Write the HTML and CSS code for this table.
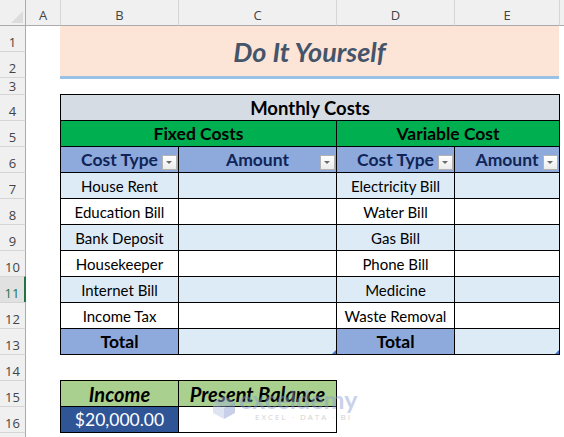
FILE: index.html
```html
<!DOCTYPE html>
<html>
<head>
<meta charset="utf-8">
<link rel="stylesheet" href="styles.css">
</head>
<body>
<div class="sheet">
  <div class="corner"></div>
  <div class="colh a">A</div>
  <div class="colh">B</div>
  <div class="colh">C</div>
  <div class="colh">D</div>
  <div class="colh">E</div>
  <div class="colh"></div>

  <div class="rowheads">
    <div class="rowh first">1</div>
    <div class="rowh">2</div>
    <div class="rowh short">3</div>
    <div class="rowh">4</div>
    <div class="rowh">5</div>
    <div class="rowh">6</div>
    <div class="rowh">7</div>
    <div class="rowh">8</div>
    <div class="rowh">9</div>
    <div class="rowh">10</div>
    <div class="rowh sel">11</div>
    <div class="rowh">12</div>
    <div class="rowh">13</div>
    <div class="rowh">14</div>
    <div class="rowh">15</div>
    <div class="rowh">16</div>
    <div class="rowh last"></div>
  </div>

  <div class="title">Do It Yourself</div>

  <div class="costs">
    <div class="span4 hdr-main">Monthly Costs</div>
    <div class="span2 hdr-group">Fixed Costs</div>
    <div class="span2 hdr-group">Variable Cost</div>
    <div class="hdr-col">Cost Type<span class="filter"></span></div>
    <div class="hdr-col">Amount<span class="filter"></span></div>
    <div class="hdr-col">Cost Type<span class="filter"></span></div>
    <div class="hdr-col">Amount<span class="filter"></span></div>

    <div class="alt">House Rent</div><div class="alt"></div><div class="alt">Electricity Bill</div><div class="alt"></div>
    <div>Education Bill</div><div></div><div>Water Bill</div><div></div>
    <div class="alt">Bank Deposit</div><div class="alt"></div><div class="alt">Gas Bill</div><div class="alt"></div>
    <div>Housekeeper</div><div></div><div>Phone Bill</div><div></div>
    <div class="alt">Internet Bill</div><div class="alt"></div><div class="alt">Medicine</div><div class="alt"></div>
    <div>Income Tax</div><div></div><div>Waste Removal</div><div></div>

    <div class="total">Total</div><div class="alt handle"></div><div class="total">Total</div><div class="alt handle"></div>
  </div>

  <div class="income">
    <div class="inc-h">Income</div>
    <div class="inc-h">Present Balance</div>
    <div class="inc-val">$20,000.00</div>
    <div></div>
  </div>

  <div class="watermark">
    <svg class="wm-logo" width="26" height="26" viewBox="0 0 26 26">
      <polygon points="13,2 24,8 13,14 2,8" fill="#9fb0dc"/>
      <polygon points="2,8 13,14 13,25 2,19" fill="#b9c5e6"/>
      <polygon points="24,8 13,14 13,25 24,19" fill="#8799cf"/>
    </svg>
    <div class="wm-text">
      <div class="wm-name">exceldemy</div>
      <div class="wm-tag">EXCEL · DATA · BI</div>
    </div>
  </div>
</div>
</body>
</html>
```

FILE: styles.css
```css
* { box-sizing: border-box; }

html, body {
  margin: 0;
  padding: 0;
  background: #ffffff;
}

body {
  width: 564px;
  height: 437px;
  overflow: hidden;
  font-family: Lato, "Liberation Sans", sans-serif;
}

.sheet {
  position: relative;
  display: grid;
  grid-template-columns: 26px 34px 118px 158px 118px 105px 1fr;
  grid-template-rows: 26px 25px 26px 17px repeat(13, 26px) 1fr;
  width: 564px;
  height: 437px;
  overflow: hidden;
}

.corner {
  grid-row: 1;
  grid-column: 1;
  position: relative;
  background: #f0f0f0;
  border-right: 1px solid #ababab;
  border-bottom: 1px solid #ababab;
}

.corner::after {
  content: "";
  position: absolute;
  right: 2px;
  bottom: 2px;
  width: 0;
  height: 0;
  border-left: 12px solid transparent;
  border-bottom: 12px solid #dcdcdc;
}

.colh {
  grid-row: 1;
  display: flex;
  align-items: flex-end;
  justify-content: center;
  padding-bottom: 3px;
  background: #f0f0f0;
  border-bottom: 1px solid #ababab;
  border-left: 1px solid #d5d5d5;
  font-family: "Open Sans", "DejaVu Sans", sans-serif;
  font-size: 13px;
  line-height: 1;
  color: #444444;
}

.colh.a { border-left: none; }

.rowheads {
  grid-column: 1;
  grid-row: 2 / -1;
  display: flex;
  flex-direction: column;
  background: #f0f0f0;
}

.rowh {
  flex: none;
  height: 26px;
  display: flex;
  align-items: flex-end;
  justify-content: center;
  padding-bottom: 2px;
  border-top: 1px solid #d5d5d5;
  border-right: 1px solid #ababab;
  font-family: "Open Sans", "DejaVu Sans", sans-serif;
  font-size: 13px;
  line-height: 1;
  color: #444444;
}

.rowh.first { height: 25px; border-top: none; }
.rowh.short { height: 17px; padding-bottom: 1px; }
.rowh.last { flex: 1; }

.rowh.sel {
  background: #e1e1e1;
  color: #217346;
  border-right: 2px solid #217346;
}

.title {
  grid-column: 3 / 7;
  grid-row: 2 / 5;
  align-self: start;
  height: 53px;
  display: flex;
  align-items: center;
  justify-content: center;
  background: #fce4d6;
  border-bottom: 3px solid #9bc2e6;
  font-style: italic;
  font-weight: 700;
  font-size: 27px;
  color: #44546a;
}

.costs {
  grid-column: 3 / 8;
  grid-row: 5 / 15;
  align-self: start;
  justify-self: start;
  width: 500px;
  display: grid;
  grid-template-columns: 118px 158px 118px 105px;
  grid-auto-rows: 26px;
  border-right: 1px solid #000;
  border-bottom: 1px solid #000;
  font-size: 15px;
  color: #000;
}

.costs > div,
.income > div {
  position: relative;
  display: flex;
  align-items: center;
  justify-content: center;
  border-left: 1px solid #000;
  border-top: 1px solid #000;
  white-space: nowrap;
}

.span4 { grid-column: span 4; }
.span2 { grid-column: span 2; }

.hdr-main {
  background: #d6dce4;
  font-weight: 700;
  font-size: 18.5px;
}

.hdr-group {
  background: #00b050;
  font-weight: 700;
  font-size: 17.5px;
}

.hdr-col {
  background: #8ea9db;
  font-weight: 700;
  font-size: 17.5px;
  color: #102458;
}

.alt { background: #ddebf7; }

.total {
  background: #8ea9db;
  font-weight: 700;
  font-size: 17.5px;
}

.filter {
  position: absolute;
  right: 1px;
  bottom: 2px;
  width: 15px;
  height: 15px;
  border: 1px solid #b3b3b3;
  background: linear-gradient(#ffffff, #ececec);
}

.filter::after {
  content: "";
  position: absolute;
  left: 3px;
  top: 5px;
  width: 0;
  height: 0;
  border-left: 3.5px solid transparent;
  border-right: 3.5px solid transparent;
  border-top: 3.5px solid #6a6a6a;
}

.handle::after {
  content: "";
  position: absolute;
  right: 0;
  bottom: 0;
  width: 0;
  height: 0;
  border-left: 4px solid transparent;
  border-bottom: 4px solid #4472c4;
}

.income {
  grid-column: 3 / 5;
  grid-row: 16 / 18;
  align-self: start;
  justify-self: start;
  width: 277px;
  display: grid;
  grid-template-columns: 118px 158px;
  grid-auto-rows: 26px;
  border-right: 1px solid #000;
  border-bottom: 1px solid #000;
  font-size: 17.5px;
  color: #000;
}

.inc-h {
  background: #a9d08e;
  font-style: italic;
  font-weight: 700;
  font-size: 20px;
}

.inc-val {
  background: #2f5597;
  color: #ffffff;
}

.watermark {
  position: absolute;
  left: 211px;
  top: 389px;
  display: flex;
  align-items: flex-start;
  gap: 2px;
  opacity: 0.45;
  pointer-events: none;
}

.wm-logo { flex: none; margin-top: 5px; }

.wm-text {
  display: flex;
  flex-direction: column;
}

.wm-name {
  font-family: Lato, sans-serif;
  font-weight: 700;
  font-size: 25px;
  line-height: 21px;
  color: #8a9dd6;
}

.wm-tag {
  margin-left: 16px;
  margin-top: 2px;
  font-family: "Open Sans", sans-serif;
  font-size: 8px;
  line-height: 10px;
  letter-spacing: 2px;
  color: #9a9a9a;
  white-space: nowrap;
}
```
